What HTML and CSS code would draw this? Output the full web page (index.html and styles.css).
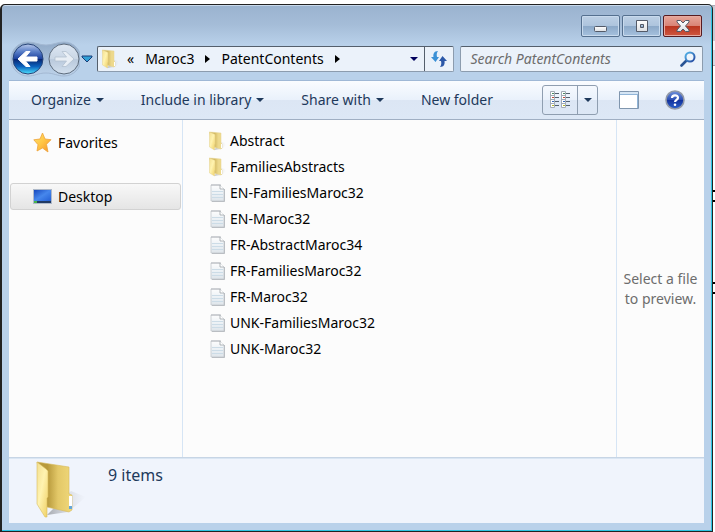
FILE: index.html
```
<!DOCTYPE html>
<html lang="en">
<head>
<meta charset="utf-8">
<title>PatentContents</title>
<link rel="stylesheet" href="styles.css">
</head>
<body>
<svg class="defs" width="0" height="0" aria-hidden="true">
  <defs>
    <linearGradient id="flap" x1="0" y1="0" x2="1" y2="1"><stop offset="0" stop-color="#f3df91"/><stop offset=".45" stop-color="#fff3b0"/><stop offset="1" stop-color="#efcf62"/></linearGradient>
    <linearGradient id="back" x1="0" y1="0" x2="1" y2="0"><stop offset="0" stop-color="#b89a3c"/><stop offset=".3" stop-color="#b89a3c"/><stop offset=".6" stop-color="#e3c868"/><stop offset="1" stop-color="#f0d87a"/></linearGradient>
    <linearGradient id="miniback" x1="0" y1="0" x2="1" y2="0"><stop offset=".4" stop-color="#d3b95f"/><stop offset=".7" stop-color="#ecd88c"/><stop offset="1" stop-color="#f0dc8c"/></linearGradient>
    <linearGradient id="shade" x1="0" y1="0" x2="1" y2="0"><stop offset="0" stop-color="#8d9096"/><stop offset="1" stop-color="#c8cbd2" stop-opacity="0"/></linearGradient>
    <linearGradient id="gold" x1="0" y1="0" x2="1" y2="1"><stop offset="0" stop-color="#ffe36a"/><stop offset=".5" stop-color="#ffc545"/><stop offset="1" stop-color="#f5902a"/></linearGradient>
    <linearGradient id="screen" x1="0" y1="0" x2="1" y2="1"><stop offset="0" stop-color="#1748bd"/><stop offset=".5" stop-color="#4687ec"/><stop offset="1" stop-color="#2460d5"/></linearGradient>
    <linearGradient id="paper" x1="0" y1="0" x2="0" y2="1"><stop offset="0" stop-color="#fdfdfd"/><stop offset=".6" stop-color="#e9eff4"/><stop offset="1" stop-color="#dfe5ea"/></linearGradient>
    <linearGradient id="orb" x1="0" y1="0" x2="0" y2="1"><stop offset="0" stop-color="#b9c9ea"/><stop offset=".25" stop-color="#5a7fc8"/><stop offset=".49" stop-color="#1d429f"/><stop offset=".5" stop-color="#08246f"/><stop offset=".75" stop-color="#0b62bd"/><stop offset="1" stop-color="#4fe3ff"/></linearGradient>
    <linearGradient id="pale" x1="0" y1="0" x2="0" y2="1"><stop offset="0" stop-color="#dde7f3"/><stop offset=".5" stop-color="#c9d6e5"/><stop offset=".52" stop-color="#b9c9dc"/><stop offset="1" stop-color="#d3e0ee"/></linearGradient>
    <linearGradient id="cradle" x1="0" y1="0" x2="0" y2="1"><stop offset="0" stop-color="#8fa9c7"/><stop offset="1" stop-color="#bed3ea"/></linearGradient>
    <linearGradient id="blue" x1="0" y1="0" x2="1" y2="1"><stop offset="0" stop-color="#55b6ea"/><stop offset="1" stop-color="#24479f"/></linearGradient>
    <linearGradient id="helpfill" x1="0" y1="0" x2="0" y2="1"><stop offset="0" stop-color="#7293dc"/><stop offset=".48" stop-color="#2c50b4"/><stop offset=".5" stop-color="#12309a"/><stop offset="1" stop-color="#2b61cd"/></linearGradient>
    <linearGradient id="glyph" x1="0" y1="0" x2="0" y2="1"><stop offset="0" stop-color="#fff"/><stop offset="1" stop-color="#dcdfe3"/></linearGradient>
    <symbol id="folder" viewBox="0 0 52 58">
      <path d="M12 54 33 51 51 36 36 30Z" fill="url(#shade)" opacity=".75"/>
      <path d="M2 1 34 6 34 33 37 34 37 49 34 51 12 46Z" fill="url(#back)" stroke="#d6bb5c" stroke-width=".6"/>
      <path d="M34 35h3v13h-3z" fill="#fff"/><path d="M34 45h3v3h-3z" fill="#65a6d8"/>
      <path d="M2 1 11 8 13 10 13 36 12 37 12 56 10 56 2 43Z" fill="url(#flap)" stroke="#d9bd60" stroke-width=".6"/>
    </symbol>
    <symbol id="minifolder" viewBox="0 0 18 20">
      <path d="M6 19 14 18 18 14 17 12 13 11Z" fill="url(#shade)" opacity=".6"/>
      <path d="M1.500 1 13 2V12L14 13V17L13 18 5 16Z" fill="url(#miniback)" stroke="#e5d290" stroke-width=".5"/>
      <path d="M13 13h1v4h-1z" fill="#fff"/>
      <path d="M1.500 1 7 3.500V13L6.500 14V19L1.500 16Z" fill="url(#flap)" stroke="#e5d290" stroke-width=".5"/>
    </symbol>
    <symbol id="doc" viewBox="0 0 16 20">
      <path d="M2 18.500h12.500V6" fill="none" stroke="#b4b8bc"/>
      <path d="M1 2h9l4 4v12H1z" fill="url(#paper)" stroke="#c3c8cd" stroke-width=".8"/>
      <path d="M10 2v4h4" fill="#fff" stroke="#9fa4aa" stroke-width=".8"/>
      <path d="M2 8.500h11M2 11.500h11M2 14.500h11" stroke="#ccdce7"/>
      <path d="M2 1v2M4 1v2M6 1v2M8 1v2M10 1v2" stroke="#a9adb2" stroke-width=".8"/>
    </symbol>
    <symbol id="down" viewBox="0 0 8 4"><path d="M0 0h8L4 4z" fill="currentColor"/></symbol>
    <symbol id="right" viewBox="0 0 5 8"><path d="M0 0 5 4 0 8z" fill="currentColor"/></symbol>
  </defs>
</svg>
<div class="window">
  <header class="titlebar">
    <button class="caption" aria-label="Minimize"><svg width="14" height="18" viewBox="0 0 14 18"><rect x=".5" y="9.500" width="12" height="5" rx="1" fill="url(#glyph)" stroke="#535a68"/></svg></button>
    <button class="caption" aria-label="Maximize"><svg width="14" height="18" viewBox="0 0 14 18"><path d="M1.500 3.500h11v11h-11zM5.500 7.500v3h3v-3z" fill="url(#glyph)" fill-rule="evenodd" stroke="#535a68" stroke-linejoin="round"/></svg></button>
    <button class="caption close" aria-label="Close"><svg width="14" height="18" viewBox="0 0 14 18"><path d="M1 3.500h3.500L7 6l2.500-2.500H13v1.500L9.500 9l3.500 4v1.500H9.500L7 12l-2.500 2.500H1V13l3.500-4L1 5z" fill="url(#glyph)" stroke="#535a68" stroke-linejoin="round"/></svg></button>
  </header>
  <div class="nav">
    <div class="history">
      <svg width="70" height="36" viewBox="0 0 70 36" aria-hidden="true">
        <path d="M18 1C25 1 29 4 36 4S47 1 54 1a17 17 0 0 1 0 34C47 35 44 32 36 32S25 35 18 35A17 17 0 0 1 18 1Z" fill="url(#cradle)" stroke="#a3b8d2"/>
        <circle cx="18" cy="18" r="15" fill="url(#orb)" stroke="#274477"/>
        <path d="M8 18 16 10.500h4L15.500 16H27v4H15.500l4.500 5.500h-4z" fill="#fff" stroke="#fff"/>
        <circle cx="54" cy="18" r="15" fill="url(#pale)" stroke="#5d6b7c"/>
        <path d="M64 18 56 10.500h-4l4.500 5.500H45v4h11.500L52 25.500h4z" fill="#e8eef5" stroke="#b2c0cf" stroke-width=".8"/>
      </svg>
      <button class="orb" aria-label="Back"></button>
      <button class="orb" aria-label="Forward"></button>
    </div>
    <button class="recent" aria-label="Recent pages"><svg width="12" height="8" viewBox="0 0 12 8"><path d="M1 1h10v1L6 7 1 2z" fill="#31a0d6" stroke="#193c78"/></svg></button>
    <div class="address">
      <svg class="small-folder" aria-hidden="true"><use href="#minifolder"/></svg>
      <button class="crumb more" aria-label="Previous locations">«</button>
      <button class="crumb">Maroc3</button>
      <svg class="arrow" aria-hidden="true"><use href="#right"/></svg>
      <button class="crumb">PatentContents</button>
      <svg class="arrow" aria-hidden="true"><use href="#right"/></svg>
      <button class="drop" aria-label="Address history"><svg class="tri"><use href="#down"/></svg></button>
      <button class="refresh" aria-label="Refresh"><svg width="18" height="16" viewBox="0 0 18 16"><path d="M8 0C4 0 3 3 3.500 6H1l4.500 5L9 6H7C6.500 4 6.500 2 8 0Z" fill="#3b91d6"/><path d="M10 16c4 0 5-3 4.500-6H17l-4.500-5L9 10h2c.5 2 .5 4-1 6Z" fill="#2b58a8"/></svg></button>
    </div>
    <label class="search">
      <input type="search" placeholder="Search PatentContents" aria-label="Search PatentContents">
      <svg width="16" height="16" viewBox="0 0 16 16" aria-hidden="true"><path d="M1.500 14.500 6.500 9.500" stroke="#285394" stroke-width="2.600" stroke-linecap="round"/><circle cx="10" cy="6" r="4.500" fill="#eef5fc" stroke="url(#blue)" stroke-width="2"/></svg>
    </label>
  </div>
  <div class="client">
    <div class="toolbar">
      <button>Organize<svg class="tri"><use href="#down"/></svg></button>
      <button>Include in library<svg class="tri"><use href="#down"/></svg></button>
      <button>Share with<svg class="tri"><use href="#down"/></svg></button>
      <button>New folder</button>
      <div class="views">
        <button aria-label="Change your view"><svg width="20" height="18" viewBox="0 0 20 18">
          <g id="col"><path d="M4 2.500h5M4 6.500h5M4 10.500h5M4 14.500h5" stroke="#53616f"/><path d="M.5.500h4v16h-4z" fill="#fff" stroke="#a3acb5"/><path d="M1 4.500h3M1 8.500h3M1 12.500h3" stroke="#a3acb5"/><path d="M2 2.500h2" stroke="#4b8a62"/><path d="M2 6.500h2" stroke="#c4473b"/><path d="M2 10.500h2" stroke="#3569ba"/><path d="M2 14.500h2" stroke="#b5b72e"/></g>
          <use href="#col" x="11"/></svg></button>
        <button aria-label="More options"><svg class="tri"><use href="#down"/></svg></button>
      </div>
      <button class="pane" aria-label="Hide the preview pane"><svg width="20" height="18" viewBox="0 0 20 18"><path d="M.5.500h19v17H.5z" fill="#fff" stroke="#8096ae"/><path d="M1 1h18v2H1z" fill="#d5e5f4"/><path d="M1 3.500h18" stroke="#91b5d8"/><path d="M18 4h1v13h-1z" fill="#91b5d8"/></svg></button>
      <button class="help" aria-label="Get help"><svg width="20" height="20" viewBox="0 0 20 20"><circle cx="10" cy="10" r="9" fill="url(#helpfill)" stroke="#9199a8" stroke-width="1.600"/><path d="M7 8C7 4.500 13 4.500 13 7.700 13 10 10 9.800 10 12" fill="none" stroke="#fff" stroke-width="2.200"/><circle cx="10" cy="14.700" r="1.300" fill="#fff"/></svg></button>
    </div>
    <div class="body">
      <nav class="tree">
        <a href="#"><svg width="20" height="20" viewBox="0 0 20 20"><path d="M9.500 0 12 6l6 .7-4.500 4.600 1.500 7.700-5.500-4-5.500 3 1-6.300L.8 6.800 7 6Z" fill="url(#gold)" stroke="#eda33a" stroke-width=".8" stroke-linejoin="round"/></svg>Favorites</a>
        <a href="#" class="current"><svg width="20" height="20" viewBox="0 0 20 20"><path d="M0 2h19v15H0z" fill="#aeb9c9"/><path d="M1 3h17v11H1z" fill="url(#screen)"/><path d="M1 14h17v2H1z" fill="#213a63"/><path d="M1 14h3v2H1z" fill="#48b44a"/></svg>Desktop</a>
      </nav>
      <main class="files">
        <a href="#"><svg class="small-folder"><use href="#minifolder"/></svg>Abstract</a>
        <a href="#"><svg class="small-folder"><use href="#minifolder"/></svg>FamiliesAbstracts</a>
        <a href="#"><svg class="doc"><use href="#doc"/></svg>EN-FamiliesMaroc32</a>
        <a href="#"><svg class="doc"><use href="#doc"/></svg>EN-Maroc32</a>
        <a href="#"><svg class="doc"><use href="#doc"/></svg>FR-AbstractMaroc34</a>
        <a href="#"><svg class="doc"><use href="#doc"/></svg>FR-FamiliesMaroc32</a>
        <a href="#"><svg class="doc"><use href="#doc"/></svg>FR-Maroc32</a>
        <a href="#"><svg class="doc"><use href="#doc"/></svg>UNK-FamiliesMaroc32</a>
        <a href="#"><svg class="doc"><use href="#doc"/></svg>UNK-Maroc32</a>
      </main>
      <aside class="preview">Select a file to preview.</aside>
    </div>
    <footer class="details">
      <svg class="big-folder" aria-hidden="true"><use href="#folder"/></svg>
      <span>9 items</span>
    </footer>
  </div>
</div>
</body>
</html>
```
FILE: styles.css
```
* { box-sizing: border-box; }

body {
  margin: 0;
  height: 100vh;
  padding: 4px 2px 0 0;
  font: 14px/20px "Noto Sans", "Open Sans", sans-serif;
  color: #000;
  background:
    linear-gradient(#000, #000) right 190px / 3px 2px no-repeat,
    linear-gradient(#000, #000) right 200px / 3px 2px no-repeat,
    linear-gradient(#000, #000) right 282px / 3px 2px no-repeat,
    linear-gradient(#000, #000) right 292px / 3px 2px no-repeat,
    linear-gradient(#a9abb8 1px, #c9cbd5 1px 36px, #f5f5f8 36px 45px, #d9dbe5 45px 60px, #a9abb8 60px 61px, #fff 61px) right 5px / 3px 62px no-repeat,
    #fff;
}

.defs { position: absolute; }
svg { display: block; flex: none; }

button {
  font: inherit;
  color: inherit;
  background: none;
  border: 0;
  padding: 0;
}

a { color: inherit; text-decoration: none; }

.window {
  height: 100%;
  display: flex;
  flex-direction: column;
  padding: 0 8px 8px 7px;
  border: 1px solid #222;
  border-left-width: 2px;
  border-radius: 5px 5px 0 0;
  box-shadow: inset -1px -1px #2bc4e2, inset 0 1px #c8d9eb;
  background: linear-gradient(#9ab3cf, #a5bdd8 20px, #b9d1ea 40px);
}

.titlebar {
  display: flex;
  justify-content: flex-end;
  gap: 2px;
  height: 36px;
  padding: 10px 2px 4px 0;
}

.caption {
  display: grid;
  place-items: center;
  width: 39px;
  height: 22px;
  border: 1px solid #55708f;
  border-radius: 2px;
  box-shadow: inset 0 0 0 1px #c8daed;
  background: linear-gradient(#bdd0e5, #adc4dd 49%, #8ba8c8 50%, #a6c1de);
}

.close {
  border-color: #571b20;
  box-shadow: inset 0 0 0 1px #e6aaa1;
  background: linear-gradient(#e7a69a, #d98375 49%, #b9341e 50%, #cf5740);
}

.nav {
  display: flex;
  align-items: center;
  height: 39px;
  padding: 0 1px 3px;
}

.history { position: relative; flex: none; }

.orb {
  position: absolute;
  top: 2px;
  left: 2px;
  width: 32px;
  height: 32px;
  border-radius: 50%;
}

.orb + .orb { left: 38px; }
.recent { padding: 0 4px 0 1px; }

.address, .search {
  display: flex;
  align-items: center;
  height: 26px;
  border: 1px solid #8c9cae;
  border-top-color: #545f6c;
  border-radius: 2px;
  background: #ebf2fa;
}

.address { flex: 1; border-left-color: #545f6c; padding-left: 3px; }
.search { flex: 0 0 35%; margin-left: 6px; padding: 0 6px 0 9px; min-width: 0; }

.small-folder { width: 18px; height: 20px; }
.crumb { white-space: nowrap; }
.more { margin: 0 11px 0 8px; }
.arrow { width: 5px; height: 8px; margin: 0 11px; }

.drop { margin-left: auto; padding: 0 6px; color: #00005c; }

.refresh {
  display: grid;
  place-items: center;
  width: 29px;
  height: 24px;
  border-left: 1px solid #545f6c;
}

.tri { width: 8px; height: 4px; }

.search input {
  flex: 1;
  min-width: 0;
  padding: 0;
  border: 0;
  outline: 0;
  font: inherit;
  font-style: italic;
  background: none;
}

.search input::placeholder { color: #6d6d6d; }

.client {
  flex: 1;
  display: flex;
  flex-direction: column;
  min-height: 0;
  background: #fcfcfc;
}

.toolbar {
  display: flex;
  align-items: center;
  height: 40px;
  padding: 0 19px 0 22px;
  color: #1e395b;
  border-top: 1px solid #9fb8d6;
  border-bottom: 1px solid #a0afc3;
  background: linear-gradient(#fafcff, #e9f1fb 50%, #dce6f4 50%, #dde8f6);
}

.toolbar > button {
  display: flex;
  align-items: center;
  gap: 5px;
  margin-right: 37px;
  white-space: nowrap;
}

.views {
  display: flex;
  height: 30px;
  margin-left: auto;
  border: 1px solid #8f9eb0;
  border-radius: 3px;
}

.views button { display: grid; place-items: center; width: 34px; }
.views button + button { width: 20px; border-left: 1px solid #8f9eb0; }
.toolbar > .pane { margin: 0 26px 0 21px; }
.toolbar > .help { margin: 0; }

.body {
  flex: 1;
  display: grid;
  grid-template-columns: 174px 1fr 88px;
  min-height: 0;
}

.tree { padding: 9px 1px 0; border-right: 1px solid #d6e5f5; }

.tree a {
  display: flex;
  align-items: center;
  gap: 5px;
  height: 27px;
  padding-left: 22px;
  border: 1px solid transparent;
  border-radius: 3px;
}

.tree a + a { margin-top: 27px; }
.tree .current { border-color: #d2d2d2; background: linear-gradient(#f8f8f8, #e5e5e5); }

.files { padding: 8px 0 0 25px; }

.files a {
  display: flex;
  align-items: center;
  gap: 4px;
  height: 26px;
}

.doc { width: 16px; height: 20px; margin-left: 2px; }

.preview {
  display: grid;
  place-items: center;
  padding: 0 3px;
  text-align: center;
  color: #6d6d6d;
  border-left: 1px solid #d6e5f5;
}

.details {
  display: flex;
  height: 66px;
  padding: 3px 26px 0;
  gap: 21px;
  font-size: 16px;
  line-height: 28px;
  color: #1e395b;
  border-top: 1px solid #c7d5e5;
  box-shadow: inset 0 1px #dae6f3;
  background: #f0f4fc;
}

.big-folder { width: 52px; height: 58px; }
```
